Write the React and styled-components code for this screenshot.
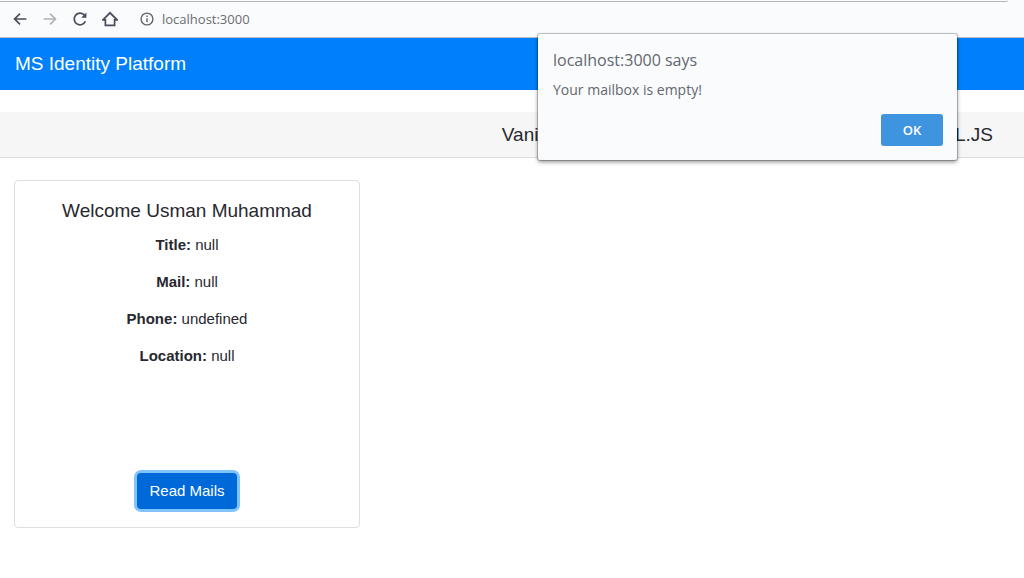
import React, { useState } from 'react';
import styled, { createGlobalStyle } from 'styled-components';

const profile = [
  { label: 'Title', value: 'null' },
  { label: 'Mail', value: 'null' },
  { label: 'Phone', value: 'undefined' },
  { label: 'Location', value: 'null' },
];

export default function App() {
  const [alertOpen, setAlertOpen] = useState(true);

  return (
    <>
      <GlobalStyle />
      <BrowserBar>
        <TabEdge />
        <Toolbar>
          <IconButton type="button" aria-label="Back">
            <Icon viewBox="0 0 16 16">
              <path d="M14.4 8H2.6M8 2.6 2.6 8 8 13.4" />
            </Icon>
          </IconButton>
          <IconButton type="button" aria-label="Forward" disabled>
            <Icon viewBox="0 0 16 16">
              <path d="M1.6 8H13.4M8 2.6 13.4 8 8 13.4" />
            </Icon>
          </IconButton>
          <IconButton type="button" aria-label="Reload">
            <Icon viewBox="0 0 16 16">
              <path d="M13.4 10.2A5.8 5.8 0 1 1 12.6 4.4L13.6 5.6" />
              <path d="M14.4 1.6V6.8H9.2Z" fill="currentColor" stroke="none" />
            </Icon>
          </IconButton>
          <IconButton type="button" aria-label="Home">
            <Icon viewBox="0 0 16 16">
              <path d="M1 8.8 8 1.8 15 8.8H12.6V14.4H3.4V8.8Z" />
            </Icon>
          </IconButton>
          <Address>
            <InfoIcon viewBox="0 0 14 14" aria-hidden="true">
              <circle cx="7" cy="7" r="5.9" />
              <path d="M7 6.2V10.2M7 3.6V5" />
            </InfoIcon>
            <Url>localhost:3000</Url>
          </Address>
        </Toolbar>
      </BrowserBar>

      <Navbar>
        <Brand href="/">MS Identity Platform</Brand>
      </Navbar>

      <PageHeader>
        <HeaderLead>Vanilla JavaScript</HeaderLead>
        <span>MSAL.JS</span>
      </PageHeader>

      <Content>
        <Card>
          <CardTitle>Welcome Usman Muhammad</CardTitle>
          {profile.map((item) => (
            <ProfileLine key={item.label}>
              <strong>{item.label}:</strong> {item.value}
            </ProfileLine>
          ))}
          <ReadButton type="button" onClick={() => setAlertOpen(true)}>
            Read Mails
          </ReadButton>
        </Card>
      </Content>

      {alertOpen && (
        <AlertBox role="alertdialog" aria-labelledby="alert-title">
          <AlertTitle id="alert-title">localhost:3000 says</AlertTitle>
          <AlertText>Your mailbox is empty!</AlertText>
          <OkButton type="button" onClick={() => setAlertOpen(false)}>
            OK
          </OkButton>
        </AlertBox>
      )}
    </>
  );
}

const GlobalStyle = createGlobalStyle`
  *, *::before, *::after {
    box-sizing: border-box;
  }
  body {
    margin: 0;
    background: #fff;
    color: #28282f;
    font-family: 'Liberation Sans', Arial, sans-serif;
    font-size: 15px;
    line-height: 22px;
  }
`;

const BrowserBar = styled.header`
  height: 38px;
  background: #fafbfc;
  border-bottom: 1px solid #b9bfc6;
  color: #484c5a;
`;

const TabEdge = styled.div`
  height: 2px;
  margin-right: 16px;
  border-bottom: 1px solid #b4b6b6;
  border-bottom-right-radius: 8px;
`;

const Toolbar = styled.div`
  display: flex;
  align-items: center;
  gap: 14px;
  height: 34px;
  padding: 0 12px;
`;

const IconButton = styled.button`
  display: flex;
  padding: 0;
  border: none;
  background: none;
  color: ${(props) => (props.disabled ? '#b2b4b8' : 'inherit')};
`;

const Icon = styled.svg`
  width: 16px;
  height: 16px;
  fill: none;
  stroke: currentColor;
  stroke-width: 1.7;
`;

const Address = styled.div`
  display: flex;
  align-items: center;
  gap: 8px;
  margin-left: 8px;
`;

const InfoIcon = styled.svg`
  width: 14px;
  height: 14px;
  fill: none;
  stroke: #62656b;
  stroke-width: 1.4;
`;

const Url = styled.span`
  color: #6a6d72;
  font-family: 'Open Sans', sans-serif;
  font-size: 13px;
`;

const Navbar = styled.nav`
  display: flex;
  align-items: center;
  height: 52px;
  padding: 0 15px;
  background: #007ffc;
`;

const Brand = styled.a`
  color: #fff;
  font-size: 19px;
  text-decoration: none;
`;

const PageHeader = styled.h1`
  display: flex;
  justify-content: flex-end;
  margin: 22px 0 0;
  padding: 11px 31px;
  border-bottom: 1px solid #dcdcdc;
  background: #f6f6f6;
  font-size: 19px;
  font-weight: 400;
  line-height: 23px;
`;

const HeaderLead = styled.span`
  width: 412px;
`;

const Content = styled.main`
  padding: 22px 14px;
`;

const Card = styled.section`
  display: flex;
  flex-direction: column;
  align-items: center;
  max-width: 346px;
  padding: 18px;
  border: 1px solid #dfdfdf;
  border-radius: 4px;
`;

const CardTitle = styled.h2`
  margin: 0 0 12px;
  font-size: 19px;
  font-weight: 400;
  line-height: 23px;
`;

const ProfileLine = styled.p`
  margin: 0 0 15px;
`;

const ReadButton = styled.button`
  margin-top: 91px;
  padding: 6px 12px;
  border: none;
  border-radius: 4px;
  background: #0069d9;
  box-shadow: 0 0 0 3px #80c4ff;
  color: #fff;
  font: inherit;
  line-height: 24px;
`;

const AlertBox = styled.div`
  position: absolute;
  top: 34px;
  right: 67px;
  display: flex;
  flex-direction: column;
  width: 419px;
  padding: 14px 14px 14px 15px;
  border-radius: 2px;
  background: #fafbfd;
  box-shadow: 0 0 0 1px rgba(0, 0, 0, 0.2), 0 2px 4px rgba(0, 0, 0, 0.45);
  color: #63676d;
  font-family: 'Open Sans', sans-serif;
`;

const AlertTitle = styled.h2`
  margin: 0 0 8px;
  font-size: 16px;
  font-weight: 400;
  line-height: 24px;
`;

const AlertText = styled.p`
  margin: 0 0 14px;
  font-size: 14px;
  line-height: 20px;
`;

const OkButton = styled.button`
  align-self: flex-end;
  width: 62px;
  height: 32px;
  border: none;
  border-radius: 3px;
  background: #3f94e0;
  color: #fff;
  font-family: inherit;
  font-size: 13px;
  font-weight: 600;
`;
